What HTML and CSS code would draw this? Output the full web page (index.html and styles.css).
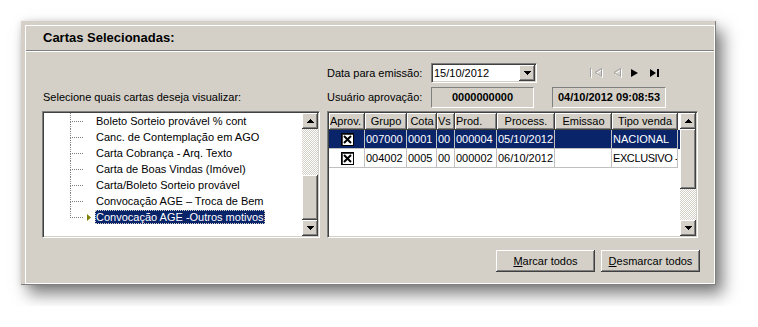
FILE: index.html
```html
<!DOCTYPE html>
<html lang="pt-BR">
<head>
  <meta charset="UTF-8">
  <meta name="viewport" content="width=device-width, initial-scale=1.0">
  <title>Cartas Selecionadas</title>
  <link rel="stylesheet" href="styles.css">
</head>
<body>
  <div class="window">
    <div class="frame">
      <h1 class="title">Cartas Selecionadas:</h1>

      <div class="content">
        <div class="spacer"></div>
        <div class="row">
          <label class="field-label" for="dataEmissao">Data para emissão:</label>
          <div class="combo sunken" id="dataEmissao">
            <span class="combo-text">15/10/2012</span>
            <span class="raised combo-btn">
              <svg width="7" height="4" viewBox="0 0 7 4"><path d="M0 0h7v1h-1v1h-1v1h-1v1h-1v-1h-1v-1h-1v-1h-1z"/></svg>
            </span>
          </div>
          <!-- first / prev are disabled -->
          <svg class="nav" width="72" height="12" viewBox="0 0 72 12">
            <g fill="none" stroke="#fff">
              <path d="M2.5 2v9"/>
              <path d="M13.5 2.5 7 6.5l6.5 4z"/>
              <path d="M32.5 2.5 26 6.5l6.5 4z"/>
            </g>
            <g fill="none" stroke="#a0a0a0">
              <path d="M1.5 1v9"/>
              <path d="M12.5 1.5 6 5.5l6.5 4z"/>
              <path d="M31.5 1.5 25 5.5l6.5 4z"/>
            </g>
            <path d="M42 2l7 4-7 4z" fill="#000"/>
            <path d="M61 2l6 4-6 4z" fill="#000"/>
            <rect x="68" y="2" width="2" height="8" fill="#000"/>
          </svg>
        </div>

        <div class="hint">Selecione quais cartas deseja visualizar:</div>
        <div class="row">
          <span class="field-label">Usuário aprovação:</span>
          <span class="readout user">0000000000</span>
          <span class="readout stamp">04/10/2012 09:08:53</span>
        </div>

        <div class="tree sunken">
          <div class="nodes">
            <div class="node"><span class="branch"><i></i><i></i></span><span class="mark"></span><span class="label">Boleto Sorteio provável % cont</span></div>
            <div class="node"><span class="branch"><i></i><i></i></span><span class="mark"></span><span class="label">Canc. de Contemplação em AGO</span></div>
            <div class="node"><span class="branch"><i></i><i></i></span><span class="mark"></span><span class="label">Carta Cobrança - Arq. Texto</span></div>
            <div class="node"><span class="branch"><i></i><i></i></span><span class="mark"></span><span class="label">Carta de Boas Vindas (Imóvel)</span></div>
            <div class="node"><span class="branch"><i></i><i></i></span><span class="mark"></span><span class="label">Carta/Boleto Sorteio provável</span></div>
            <div class="node"><span class="branch"><i></i><i></i></span><span class="mark"></span><span class="label">Convocação AGE – Troca de Bem</span></div>
            <div class="node last"><span class="branch"><i></i></span><span class="mark"><svg width="4" height="7" viewBox="0 0 4 7"><path d="M0 0l4 3.5L0 7z" fill="#808000"/></svg></span><span class="label selected">Convocação AGE -Outros motivos</span></div>
          </div>
          <div class="scrollbar">
            <span class="raised sb-btn"><svg width="7" height="4" viewBox="0 0 7 4"><path d="M3 0h1v1h1v1h1v1h1v1h-7v-1h1v-1h1v-1h1z"/></svg></span>
            <div class="track bottom"><div class="raised thumb" style="height:45px"></div></div>
            <span class="raised sb-btn"><svg width="7" height="4" viewBox="0 0 7 4"><path d="M0 0h7v1h-1v1h-1v1h-1v1h-1v-1h-1v-1h-1v-1h-1z"/></svg></span>
          </div>
        </div>

        <div class="table sunken">
          <div class="rows">
            <div class="grid-row head">
              <span class="raised left">Aprov.</span>
              <span class="raised">Grupo</span>
              <span class="raised">Cota</span>
              <span class="raised left">Vs</span>
              <span class="raised left">Prod.</span>
              <span class="raised">Process.</span>
              <span class="raised">Emissao</span>
              <span class="raised">Tipo venda</span>
            </div>
            <div class="grid-row selected">
              <span class="cell check-cell"><span class="check"><svg width="9" height="9" viewBox="0 0 9 9"><path d="M1 1l7 7M8 1L1 8" stroke="#000" stroke-width="2"/></svg></span></span>
              <span class="cell">007000</span>
              <span class="cell">0001</span>
              <span class="cell">00</span>
              <span class="cell">000004</span>
              <span class="cell">05/10/2012</span>
              <span class="cell"></span>
              <span class="cell">NACIONAL</span>
            </div>
            <div class="grid-row">
              <span class="cell check-cell"><span class="check"><svg width="9" height="9" viewBox="0 0 9 9"><path d="M1 1l7 7M8 1L1 8" stroke="#000" stroke-width="2"/></svg></span></span>
              <span class="cell">004002</span>
              <span class="cell">0005</span>
              <span class="cell">00</span>
              <span class="cell">000002</span>
              <span class="cell">06/10/2012</span>
              <span class="cell"></span>
              <span class="cell tight">EXCLUSIVO -</span>
            </div>
          </div>
          <div class="scrollbar">
            <span class="raised sb-btn"><svg width="7" height="4" viewBox="0 0 7 4"><path d="M3 0h1v1h1v1h1v1h1v1h-7v-1h1v-1h1v-1h1z"/></svg></span>
            <div class="track"><div class="raised thumb" style="height:60px"></div></div>
            <span class="raised sb-btn"><svg width="7" height="4" viewBox="0 0 7 4"><path d="M0 0h7v1h-1v1h-1v1h-1v1h-1v-1h-1v-1h-1v-1h-1z"/></svg></span>
          </div>
        </div>

        <div class="actions">
          <button class="raised" type="button"><u>M</u>arcar todos</button>
          <button class="raised" type="button"><u>D</u>esmarcar todos</button>
        </div>
      </div>
    </div>
  </div>
</body>
</html>
```

FILE: styles.css
```css
body {
  margin: 0;
  padding: 21px;
  background: #fff;
  font-family: "Liberation Sans", Arial, sans-serif;
  font-size: 11px;
  color: #000;
}
.window {
  width: 695px;
  height: 264px;
  box-sizing: border-box;
  padding: 4px 0 0 4px;
  background: #d4d0c8;
  border-right: 1px solid #808080;
  border-bottom: 1px solid #808080;
  box-shadow: 7px 9px 15px rgba(0, 0, 0, 0.5), 0 0 6px rgba(0, 0, 0, 0.12);
}
.frame {
  height: 100%;
  box-sizing: border-box;
  border: 1px solid #fff;
}
.title {
  margin: 0;
  height: 24px;
  line-height: 24px;
  padding-left: 17px;
  font-size: 13px;
  font-weight: bold;
  border-bottom: 1px solid #808080;
  box-shadow: 0 1px #fff;
}
.content {
  display: grid;
  grid-template-columns: 278px 371px;
  grid-template-rows: 24px 24px 127px auto;
  column-gap: 7px;
  padding: 12px 0 0 16px;
}

/* 3d borders */
.sunken {
  box-sizing: border-box;
  border: 1px solid;
  border-color: #808080 #fff #fff #808080;
  box-shadow: inset 1px 1px #404040, inset -1px -1px #d4d0c8;
  padding: 1px;
}
.raised {
  box-sizing: border-box;
  background: #d4d0c8;
  box-shadow: inset -1px -1px #404040, inset 1px 1px #fff, inset -2px -2px #808080;
}

.row {
  display: flex;
  align-items: flex-start;
}
.field-label {
  width: 104px;
  height: 20px;
  line-height: 20px;
}
.hint {
  padding-left: 1px;
  height: 21px;
  line-height: 21px;
}
.combo {
  width: 106px;
  height: 20px;
  background: #fff;
  display: flex;
  align-items: center;
}
.combo-text {
  flex: 1;
  padding-left: 1px;
}
.combo-btn {
  width: 16px;
  height: 16px;
  display: flex;
  align-items: center;
  justify-content: center;
}
.nav {
  margin: 4px 0 0 52px;
}
.readout {
  box-sizing: border-box;
  height: 21px;
  line-height: 19px;
  text-align: center;
  font-weight: bold;
  border: 1px solid;
  border-color: #808080 #fff #fff #808080;
}
.user {
  width: 103px;
}
.stamp {
  width: 114px;
  margin-left: 18px;
}

/* tree */
.tree {
  display: flex;
  background: #fff;
}
.nodes {
  flex: 1;
  overflow: hidden;
}
.node {
  display: flex;
  align-items: center;
  height: 16px;
  white-space: nowrap;
}
.branch {
  display: flex;
  flex-direction: column;
  align-self: flex-start;
  width: 13px;
  margin-left: 26px;
}
.branch i {
  display: block;
  height: 8px;
  border-left: 1px dotted #808080;
}
.branch i:first-child {
  box-sizing: border-box;
  height: 9px;
  border-bottom: 1px dotted #808080;
}
.branch i + i {
  height: 7px;
}
.mark {
  width: 12px;
  display: flex;
  padding-left: 4px;
  box-sizing: border-box;
}
.label {
  height: 14px;
  line-height: 14px;
  padding: 0 1px;
}
.label.selected {
  background: #0a246a;
  color: #fff;
  outline: 1px dotted #d4d0c8;
  outline-offset: -1px;
}

/* scrollbars */
.scrollbar {
  width: 16px;
  display: flex;
  flex-direction: column;
}
.sb-btn {
  height: 16px;
  display: flex;
  align-items: center;
  justify-content: center;
}
.track {
  flex: 1;
  display: flex;
  flex-direction: column;
  background: repeating-conic-gradient(#fff 0 25%, #d4d0c8 0 50%) 0 0 / 2px 2px;
}
.track.bottom {
  justify-content: flex-end;
}

/* table */
.table {
  display: flex;
  background: #fff;
}
.rows {
  flex: 1;
  overflow: hidden;
}
.grid-row {
  display: grid;
  grid-template-columns: 36px 42px 30px 18px 42px 58px 57px 66px;
  height: 19px;
}
.grid-row.head {
  height: 17px;
}
.head span {
  line-height: 17px;
  text-align: center;
  white-space: nowrap;
  overflow: hidden;
}
.head span.left {
  text-align: left;
  padding-left: 1px;
}
.cell {
  box-sizing: border-box;
  border-right: 1px solid #c0c0c0;
  border-bottom: 1px solid #c0c0c0;
  padding-left: 1px;
  line-height: 18px;
  white-space: nowrap;
  overflow: hidden;
}
.cell.tight {
  letter-spacing: -0.4px;
}
.grid-row.selected {
  background: #0a246a;
  color: #fff;
}
.check-cell {
  display: flex;
  align-items: center;
  justify-content: center;
}
.check {
  width: 13px;
  height: 13px;
  box-sizing: border-box;
  background: #fff;
  border: 1px solid #000;
  box-shadow: inset 1px 1px #404040;
  display: flex;
  align-items: center;
  justify-content: center;
  padding: 1px 0 0 1px;
}

/* buttons */
.actions {
  grid-column: 1 / -1;
  display: flex;
  justify-content: flex-end;
  gap: 6px;
  margin: 12px -2px 0 0;
}
.actions button {
  width: 99px;
  height: 22px;
  border: 0;
  font: inherit;
  color: #000;
  padding: 0;
}
```
